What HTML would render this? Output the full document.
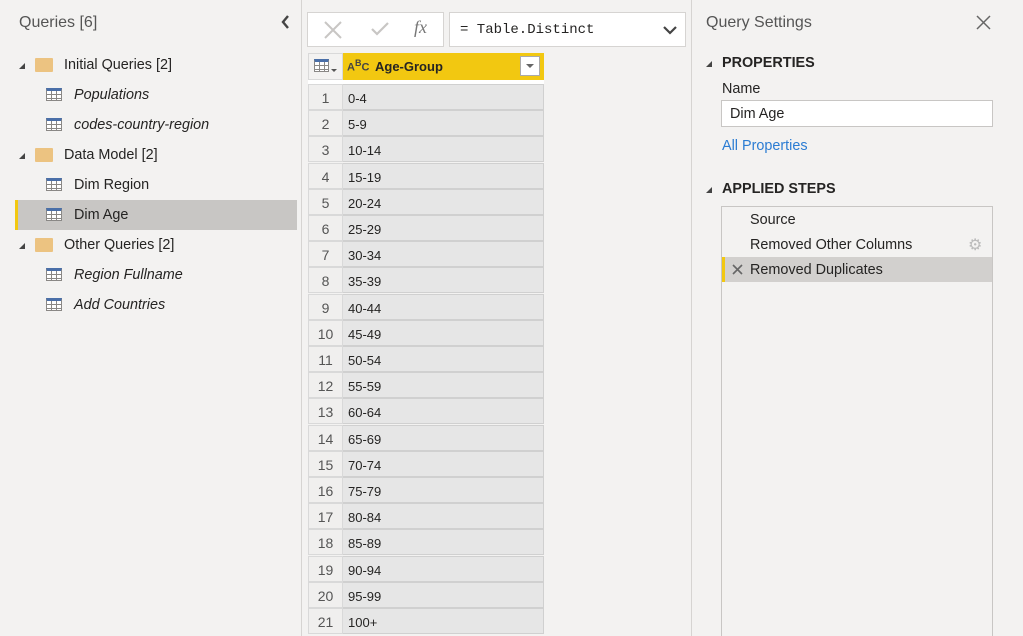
<!DOCTYPE html>
<html><head><meta charset="utf-8"><style>
*{margin:0;padding:0;box-sizing:border-box}
html,body{width:1023px;height:636px;overflow:hidden}
body{background:#f3f2f1;font-family:"Segoe UI","Liberation Sans",sans-serif;color:#252423;position:relative;font-size:14.4px}
.a{position:absolute;white-space:nowrap}
.vl{position:absolute;top:0;height:636px;width:1px;background:#d6d4d2}
.ti{position:absolute;width:16px;height:13px;border:1px solid #8a8886;background:
linear-gradient(#8a8886,#8a8886) 0 3px/100% 1px no-repeat,
linear-gradient(#8a8886,#8a8886) 0 7px/100% 1px no-repeat,
linear-gradient(#8a8886,#8a8886) 4px 0/1px 100% no-repeat,
linear-gradient(#8a8886,#8a8886) 9px 0/1px 100% no-repeat,#fff;border-top:3px solid #4a6fa8}
.fold{position:absolute;width:18px;height:14px;background:#ecc381;border-radius:1px}
.tri{position:absolute;width:0;height:0;border-left:6px solid transparent;border-bottom:6px solid #444}
.rn{position:absolute;left:308px;width:35px;height:26px;border:1px solid #d9d9d9;background:#f0efee;text-align:center;color:#555;font-size:14px;line-height:27px}
.rd{position:absolute;left:343px;width:201px;height:26px;border:1px solid #d0d0d0;border-left:none;background:#e6e6e6;font-size:13px;line-height:27px;padding-left:5px}
</style></head><body>
<div class="a" style="left:19px;top:14px;font-size:16px;color:#555">Queries [6]</div>
<svg class="a" style="left:281px;top:15px" width="10" height="14"><path d="M7 1L2 7l5 6" stroke="#444" stroke-width="2.4" fill="none"/></svg>
<div class="vl" style="left:301px"></div>
<div class="vl" style="left:691px"></div>

<div class="tri" style="left:19px;top:63px"></div><div class="fold" style="left:35px;top:58px"></div><div class="a" style="left:64px;top:57px">Initial Queries [2]</div>
<div class="ti" style="left:46px;top:88px"></div><div class="a" style="left:74px;top:87px;font-style:italic">Populations</div>
<div class="ti" style="left:46px;top:118px"></div><div class="a" style="left:74px;top:117px;font-style:italic">codes-country-region</div>
<div class="tri" style="left:19px;top:153px"></div><div class="fold" style="left:35px;top:148px"></div><div class="a" style="left:64px;top:147px">Data Model [2]</div>
<div class="ti" style="left:46px;top:178px"></div><div class="a" style="left:74px;top:177px">Dim Region</div>
<div class="a" style="left:15px;top:200px;width:282px;height:30px;background:#c8c6c4;border-left:3px solid #f2c811"></div>
<div class="ti" style="left:46px;top:208px"></div><div class="a" style="left:74px;top:207px">Dim Age</div>
<div class="tri" style="left:19px;top:243px"></div><div class="fold" style="left:35px;top:238px"></div><div class="a" style="left:64px;top:237px">Other Queries [2]</div>
<div class="ti" style="left:46px;top:268px"></div><div class="a" style="left:74px;top:267px;font-style:italic">Region Fullname</div>
<div class="ti" style="left:46px;top:298px"></div><div class="a" style="left:74px;top:297px;font-style:italic">Add Countries</div>

<div class="a" style="left:307px;top:12px;width:137px;height:35px;background:#fff;border:1px solid #d6d4d2"></div>
<svg class="a" style="left:324px;top:21px" width="18" height="18"><path d="M1 1l16 16M17 1L1 17" stroke="#c8c6c4" stroke-width="2"/></svg>
<svg class="a" style="left:371px;top:22px" width="18" height="14"><path d="M1 7l5 5L17 1" stroke="#c8c6c4" stroke-width="2.2" fill="none"/></svg>
<div class="a" style="left:414px;top:17px;font-size:18px;color:#777;font-family:'Liberation Serif',serif;font-style:italic">fx</div>
<div class="a" style="left:449px;top:12px;width:237px;height:35px;background:#fff;border:1px solid #d6d4d2"></div>
<div class="a" style="left:460px;top:22px;font-family:'Liberation Mono',monospace;font-size:14px">= Table.Distinct</div>
<svg class="a" style="left:663px;top:25px" width="14" height="10"><path d="M1 2l6 6 6-6" stroke="#444" stroke-width="2.2" fill="none"/></svg>

<div class="a" style="left:308px;top:53px;width:35px;height:27px;border:1px solid #d9d9d9;background:#f3f2f1"></div>
<div class="ti" style="left:314px;top:59px;width:15px;height:13px"></div>
<div class="a" style="left:331px;top:69px;border-left:3px solid transparent;border-right:3px solid transparent;border-top:3px solid #555"></div>
<div class="a" style="left:343px;top:53px;width:201px;height:27px;background:#f2c811"></div>
<div class="a" style="left:347px;top:58px;font-size:11px;color:#444;font-weight:bold">A<sup style="font-size:9px">B</sup>C</div>
<div class="a" style="left:375px;top:59px;font-weight:bold;font-size:13px">Age-Group</div>
<div class="a" style="left:520px;top:56px;width:20px;height:20px;background:#fff;border:1px solid #aaa"></div>
<div class="a" style="left:526px;top:64px;border-left:4px solid transparent;border-right:4px solid transparent;border-top:4px solid #666"></div>
<div class="a" style="left:308px;top:80px;width:236px;height:4px;background:#fff"></div>

<div id="rows"></div>
<script>
var v=["0-4","5-9","10-14","15-19","20-24","25-29","30-34","35-39","40-44","45-49","50-54","55-59","60-64","65-69","70-74","75-79","80-84","85-89","90-94","95-99","100+"],h="";
for(var i=0;i<21;i++){var t=84+i*26.2;h+='<div class="rn" style="top:'+t+'px">'+(i+1)+'</div><div class="rd" style="top:'+t+'px">'+v[i]+'</div>';}
document.getElementById("rows").innerHTML=h;
</script>

<div class="a" style="left:706px;top:14px;font-size:16px;color:#555">Query Settings</div>
<svg class="a" style="left:976px;top:15px" width="15" height="15"><path d="M1 1l13 13M14 1L1 14" stroke="#666" stroke-width="1.5"/></svg>
<div class="tri" style="left:706px;top:61px"></div>
<div class="a" style="left:722px;top:55px;font-weight:bold;font-size:14.4px">PROPERTIES</div>
<div class="a" style="left:722px;top:81px">Name</div>
<div class="a" style="left:721px;top:100px;width:272px;height:27px;background:#fff;border:1px solid #c8c6c4;padding-left:8px;line-height:27px">Dim Age</div>
<div class="a" style="left:722px;top:138px;color:#2b7cd3">All Properties</div>
<div class="tri" style="left:706px;top:187px"></div>
<div class="a" style="left:722px;top:181px;font-weight:bold;font-size:14.4px">APPLIED STEPS</div>
<div class="a" style="left:721px;top:206px;width:272px;height:440px;background:#f3f2f1;border:1px solid #c8c6c4"></div>
<div class="a" style="left:750px;top:212px">Source</div>
<div class="a" style="left:750px;top:237px">Removed Other Columns</div>
<div class="a" style="left:968px;top:235px;font-size:16px;color:#bbb">⚙</div>
<div class="a" style="left:722px;top:257px;width:270px;height:25px;background:#d2d0ce;border-left:3px solid #f2c811"></div>
<svg class="a" style="left:732px;top:264px" width="11" height="11"><path d="M1 1l9 9M10 1L1 10" stroke="#666" stroke-width="1.6"/></svg>
<div class="a" style="left:750px;top:262px">Removed Duplicates</div>
</body></html>
